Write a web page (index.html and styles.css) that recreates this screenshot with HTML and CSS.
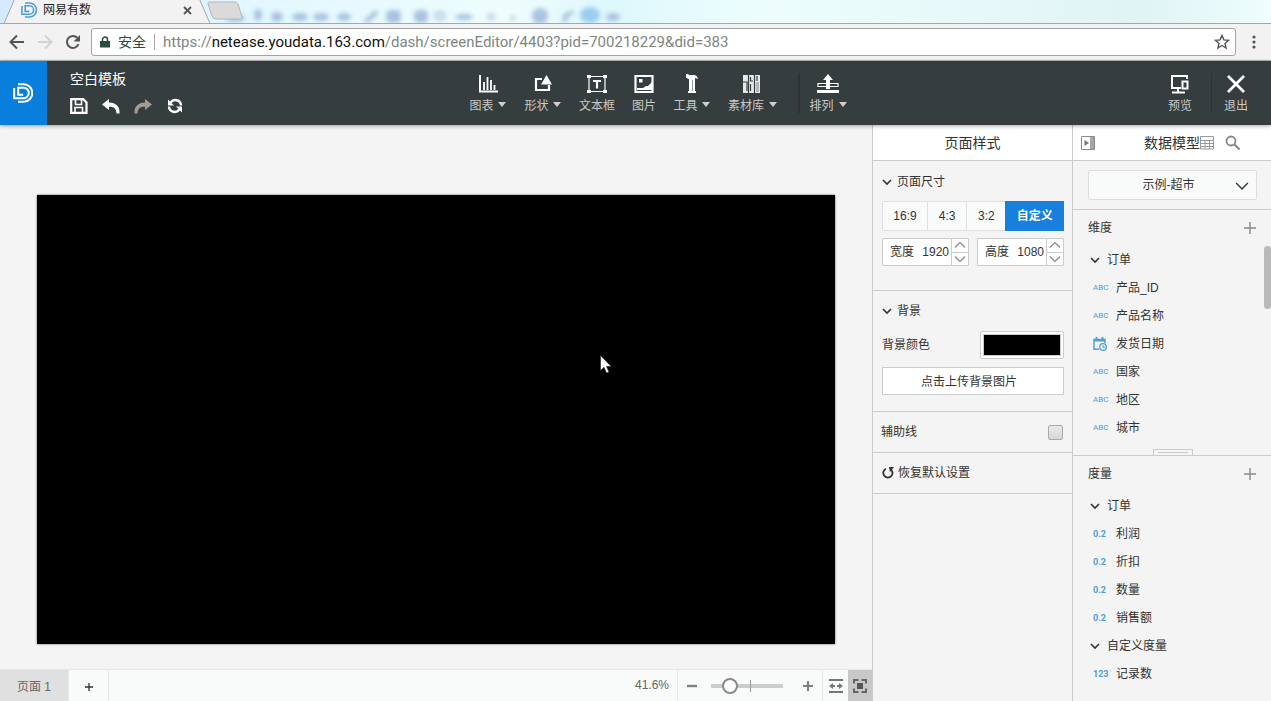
FILE: index.html
```html
<!DOCTYPE html>
<html lang="zh-CN">
<head>
  <meta charset="UTF-8" />
  <meta name="viewport" content="width=device-width, initial-scale=1.0"/>
  <title>网易有数</title>
  <link rel="stylesheet" href="styles.css">
</head>
<body>
  <!-- shared icons -->
  <svg class="defs" aria-hidden="true">
    <symbol id="logo" viewBox="0 0 20 20">
      <path d="M5 1.2h5.5a8.8 8.8 0 0 1 0 17.6H5M1.2 5v10.3h9.3a5.3 5.3 0 0 0 0-10.6H5.2v7h5" fill="none" stroke="currentColor" stroke-width="2"/>
    </symbol>
    <symbol id="chevron" viewBox="0 0 10 10">
      <path d="M1 3l4 4 4-4" fill="none" stroke="currentColor" stroke-width="1.6"/>
    </symbol>
    <symbol id="chevron-thin" viewBox="0 0 12 12">
      <path d="M1 3.500l5 5 5-5" fill="none" stroke="currentColor" stroke-width="1.2"/>
    </symbol>
    <symbol id="plus" viewBox="0 0 12 12">
      <path d="M6 0v12M0 6h12" stroke="currentColor" stroke-width="1.4"/>
    </symbol>
  </svg>

  <!-- Browser window -->
  <div class="tabstrip">
    <svg class="glass" viewBox="0 0 1271 24" preserveAspectRatio="none" aria-hidden="true">
      <g fill="#a9c4df">
        <ellipse cx="235" cy="18" rx="10" ry="4"/><ellipse cx="258" cy="15" rx="4" ry="6"/>
        <ellipse cx="277" cy="17" rx="6" ry="5"/><ellipse cx="300" cy="17" rx="8" ry="4"/>
        <ellipse cx="321" cy="17" rx="8" ry="4"/><ellipse cx="344" cy="17" rx="7" ry="4"/>
        <path d="M363 21l12-11 4 3-11 10z"/><rect x="386" y="10" width="15" height="13" rx="5"/>
        <rect x="414" y="10" width="14" height="13" rx="5"/><ellipse cx="440" cy="16" rx="7" ry="6" opacity=".5"/>
        <ellipse cx="464" cy="17" rx="9" ry="3"/><circle cx="491" cy="17" r="4" opacity=".6"/>
        <circle cx="513" cy="18" r="3" opacity=".6"/><circle cx="540" cy="16" r="8"/>
        <path d="M562 22q0-12 12-11v3q-6 0-7 8z"/><ellipse cx="590" cy="15" rx="10" ry="8" fill="#9bcdf0"/>
        <ellipse cx="613" cy="17" rx="7" ry="4"/>
      </g>
    </svg>
    <svg class="tab-shape" viewBox="0 0 245 24" aria-hidden="true">
      <path d="M0 24v-1h4L15-2h184l11 25v1z" fill="#f2f2f2"/>
      <path d="M0 23.500h4L15-2M199-2l11 25.500h35" fill="none" stroke="#a3a8ab"/>
      <path d="M209 2h26q2 0 3 2l4 13q0 2-2 2h-24q-3 0-4-3l-4-12q0-2 1-2z" fill="#dadada" stroke="#b3b7ba"/>
    </svg>
    <div class="tab">
      <svg class="tab-logo" width="16" height="16"><use href="#logo"/></svg>
      <span>网易有数</span>
      <button class="tab-close" aria-label="关闭标签页"><svg width="9" height="9" viewBox="0 0 9 9"><path d="M1 1l7 7M8 1l-7 7" stroke="#555" stroke-width="1.8"/></svg></button>
    </div>
  </div>
  <div class="browser-bar">
    <button aria-label="后退"><svg width="16" height="16" viewBox="0 0 16 16"><path d="M15 8H2M8 1.500L1.500 8 8 14.500" fill="none" stroke="#555" stroke-width="2"/></svg></button>
    <button aria-label="前进"><svg width="16" height="16" viewBox="0 0 16 16"><path d="M1 8h13M8 1.500L14.500 8 8 14.500" fill="none" stroke="#d3d3d3" stroke-width="2"/></svg></button>
    <button aria-label="刷新"><svg width="16" height="16" viewBox="0 0 16 16"><path d="M13.500 10.200A6 6 0 1 1 12.300 3.800" fill="none" stroke="#555" stroke-width="2"/><path d="M15 1v6.500H8.500z" fill="#555"/></svg></button>
    <div class="address">
      <svg width="10" height="12" viewBox="0 0 10 12"><path d="M0 5h10v6.500H0z" fill="#2b4a42"/><path d="M2.500 5V3.500a2.500 2.500 0 0 1 5 0V5" fill="none" stroke="#2b4a42" stroke-width="1.500"/></svg>
      <span class="secure">安全</span>
      <a class="url" href="#"><span>https://</span><b>netease.youdata.163.com</b><span>/dash/screenEditor/4403?pid=700218229&amp;did=383</span></a>
      <button aria-label="收藏"><svg width="16" height="16" viewBox="0 0 16 16"><path d="M8 1.500l1.900 4.400 4.700.4-3.600 3.100 1.100 4.600L8 11.500 3.900 14 5 9.400 1.400 6.300l4.700-.4z" fill="none" stroke="#555" stroke-width="1.400"/></svg></button>
    </div>
    <button class="menu" aria-label="菜单"><svg width="4" height="14" viewBox="0 0 4 14" fill="#555"><circle cx="2" cy="2" r="1.600"/><circle cx="2" cy="7" r="1.600"/><circle cx="2" cy="12" r="1.600"/></svg></button>
  </div>

  <!-- App header -->
  <header class="app-header">
    <a class="brand" href="#" aria-label="网易有数"><svg width="20" height="20"><use href="#logo"/></svg></a>
    <div class="file">
      <h1>空白模板</h1>
      <div class="file-actions">
        <button aria-label="保存"><svg width="18" height="16" viewBox="0 0 18 16"><path d="M1.200 1.200h12L16.500 4.500v10.300H1.200z" fill="none" stroke="#fff" stroke-width="2.200"/><path d="M5.500 1v5.500h6V1M5 15V9.500h7.500V15" fill="none" stroke="#fff" stroke-width="1.600"/></svg></button>
        <button aria-label="撤销"><svg width="18" height="16" viewBox="0 0 18 16"><path d="M0 6.500L7 1v3.500c7 0 11 4 10.500 11h-3C14.300 10.500 12 8.700 7 8.700V12z" fill="#fff"/></svg></button>
        <button aria-label="重做"><svg width="18" height="16" viewBox="0 0 18 16"><path d="M18 6.500L11 1v3.500C4 4.500 0 8.500.5 15.500h3C3.700 10.500 6 8.700 11 8.700V12z" fill="#a39c94"/></svg></button>
        <button aria-label="刷新数据"><svg width="18" height="16" viewBox="0 0 18 16"><path d="M4.500 5A5.600 5.600 0 0 1 15 7.500M13.500 11A5.600 5.600 0 0 1 3 8.500" fill="none" stroke="#fff" stroke-width="2.400"/><path d="M2 1.500v6h6zM16 14.500v-6h-6z" fill="#fff"/></svg></button>
      </div>
    </div>
    <nav class="tools">
      <button class="drop">
        <svg width="20" height="20" viewBox="0 0 20 20"><path d="M2 1v16.500h18" fill="none" stroke="#fff" stroke-width="2"/><path d="M6 8v8M9.500 3v13M13 6v10M16.500 11v5" stroke="#fff" stroke-width="1.800"/></svg>
        <span>图表</span>
      </button>
      <button class="drop">
        <svg width="20" height="20" viewBox="0 0 20 20"><path d="M9 5H3v11h13v-5" fill="none" stroke="#fff" stroke-width="2.200"/><path d="M13.500 1L19 10.500H8z" fill="#fff"/></svg>
        <span>形状</span>
      </button>
      <button>
        <svg width="22" height="20" viewBox="0 0 22 20"><path d="M3 2.500h16v15H3z" fill="none" stroke="#fff" stroke-width="1.200"/><path d="M1 1h4v3H1zM17 1h4v3h-4zM1 16h4v3H1zM17 16h4v3h-4z" fill="#fff"/><path d="M7 7h8M11 7v7.500" stroke="#fff" stroke-width="2.200"/></svg>
        <span>文本框</span>
      </button>
      <button>
        <svg width="20" height="20" viewBox="0 0 20 20"><path d="M1.500 2h17v16h-17z" fill="none" stroke="#fff" stroke-width="2.200"/><path d="M5 5h3.500v3.500H5zM3 16v-2h6l3-2h2l4-4v8z" fill="#fff"/></svg>
        <span>图片</span>
      </button>
      <button class="drop">
        <svg width="16" height="20" viewBox="0 0 16 20"><path d="M2 0h2l1 1h5q3 0 4 4l-3-1v13h1v2H4v-2h1V5H4L3 4H2z" fill="#fff"/><path d="M8.500 6v11" stroke="#a0a2a3"/></svg>
        <span>工具</span>
      </button>
      <button class="drop">
        <svg width="18" height="20" viewBox="0 0 18 20"><path d="M0 1h17v18H0z" fill="#e8e8e8"/><path d="M5.500 1v18M11.500 1v18" stroke="#363d3f" stroke-width="1.200"/><path d="M0 8h4v9M7.500 3v4h2.500M7.500 10v7M14 2v5" fill="none" stroke="#363d3f" stroke-width="1.200"/><path d="M13 8h3v10h-3z" fill="#b5b7b7"/></svg>
        <span>素材库</span>
      </button>
      <i class="bar"></i>
      <button class="drop">
        <svg width="22" height="20" viewBox="0 0 22 20"><path d="M0 16h22v3H0zM11 0l5 6h-3v9H9V6H6z" fill="#fff"/><path d="M9 9.500H1v3h8M13 9.500h8v3h-8" fill="none" stroke="#fff" stroke-width="1.200"/></svg>
        <span>排列</span>
      </button>
    </nav>
    <div class="actions">
      <button>
        <svg width="20" height="20" viewBox="0 0 20 20"><path d="M17 5V2H2v12h9M8 14v4M2 18.500h13" fill="none" stroke="#fff" stroke-width="2"/><path d="M12.500 7.500h5v7h-5z" fill="none" stroke="#fff" stroke-width="2"/></svg>
        <span>预览</span>
      </button>
      <i class="bar"></i>
      <button>
        <svg width="20" height="20" viewBox="0 0 20 20"><path d="M2 2l16 16M18 2L2 18" stroke="#fff" stroke-width="2.800"/></svg>
        <span>退出</span>
      </button>
    </div>
  </header>

  <main>
    <section class="workspace">
      <div class="stage">
        <div class="screen">
          <svg class="pointer" width="12" height="19" viewBox="0 0 12 19"><path d="M.5.5v15l3.500-3.200 2.500 5.700 2.500-1-2.500-5.500h4.700z" fill="#fff" stroke="#222" stroke-width=".6"/></svg>
        </div>
      </div>
      <div class="statusbar">
        <button class="page-tab">页面 1</button>
        <button class="page-add" aria-label="添加页面"><svg width="8" height="8" viewBox="0 0 8 8"><path d="M4 0v8M0 4h8" stroke="#333" stroke-width="1.300"/></svg></button>
        <output class="percent" for="zoom">41.6%</output>
        <div class="zoom">
          <button aria-label="缩小"><svg width="12" height="12" viewBox="0 0 12 12"><path d="M1 6h10" stroke="#7d8082" stroke-width="2.400"/></svg></button>
          <input type="range" id="zoom" min="0" max="100" value="20" aria-label="缩放比例">
          <button aria-label="放大"><svg width="12" height="12" viewBox="0 0 12 12"><path d="M1 6h10M6 1v10" stroke="#7d8082" stroke-width="2.200"/></svg></button>
        </div>
        <button class="fit" aria-label="适应宽度"><svg width="14" height="14" viewBox="0 0 14 14"><path d="M0 1h14M0 13h14" stroke="#777" stroke-width="1.800"/><path d="M0 7l4-3v2h2v2H4v2zM14 7l-4-3v2H8v2h2v2z" fill="#777"/></svg></button>
        <button class="fit active" aria-label="适应屏幕"><svg width="14" height="14" viewBox="0 0 14 14"><path d="M1 4.500V1h4.500M8.500 1H13v3.500M13 9.500V13H8.500M5.500 13H1V9.500" fill="none" stroke="#666" stroke-width="2"/><rect x="4" y="4" width="6" height="6" fill="#555"/></svg></button>
      </div>
    </section>

    <!-- Page style panel -->
    <aside class="style-panel">
      <h2 class="panel-title">页面样式</h2>
      <section class="size">
        <h3><svg width="10" height="10"><use href="#chevron"/></svg>页面尺寸</h3>
        <div class="ratios">
          <button>16:9</button><button>4:3</button><button>3:2</button><button class="active">自定义</button>
        </div>
        <div class="dims">
          <div class="dim">
            <label for="w">宽度</label><input type="text" id="w" value="1920">
            <div class="spin"><button aria-label="增加宽度"><svg width="12" height="12"><use href="#chevron-thin"/></svg></button><button aria-label="减少宽度"><svg width="12" height="12"><use href="#chevron-thin"/></svg></button></div>
          </div>
          <div class="dim">
            <label for="h">高度</label><input type="text" id="h" value="1080">
            <div class="spin"><button aria-label="增加高度"><svg width="12" height="12"><use href="#chevron-thin"/></svg></button><button aria-label="减少高度"><svg width="12" height="12"><use href="#chevron-thin"/></svg></button></div>
          </div>
        </div>
      </section>
      <section class="background">
        <h3><svg width="10" height="10"><use href="#chevron"/></svg>背景</h3>
        <div class="color-row"><label for="bg">背景颜色</label><input type="color" id="bg" value="#000000"></div>
        <button class="upload">点击上传背景图片</button>
      </section>
      <div class="option"><label for="guides">辅助线</label><input type="checkbox" id="guides"></div>
      <button class="option reset"><svg width="12" height="12" viewBox="0 0 12 12"><path d="M4 1.800A4.600 4.600 0 1 0 8.500 2.200" fill="none" stroke="#333" stroke-width="1.800"/><path d="M7 0h5L8 5z" fill="#333"/></svg>恢复默认设置</button>
    </aside>

    <!-- Data model panel -->
    <aside class="data-panel">
      <div class="panel-title">
        <button aria-label="收起面板"><svg width="14" height="14" viewBox="0 0 14 14"><path d="M.5.5h13v13H.5z" fill="none" stroke="#8a8a8a"/><path d="M3.500 4v6L8 7z" fill="#777"/><path d="M10 1v12M12 1v12" stroke="#888" stroke-width="1.500"/></svg></button>
        <h2>数据模型</h2>
        <button aria-label="查看数据"><svg width="14" height="14" viewBox="0 0 14 14"><path d="M.5.5h13v12.500H.5zM.5 4.500h13M.5 7.500h13M.5 10.500h13M5 4.500V13M9.500 4.500V13" fill="none" stroke="#999"/></svg></button>
        <button class="search" aria-label="搜索"><svg width="16" height="16" viewBox="0 0 16 16"><circle cx="6" cy="6" r="4.500" fill="none" stroke="#888" stroke-width="1.800"/><path d="M9.500 9.500l5 5" stroke="#888" stroke-width="2.200"/></svg></button>
      </div>
      <div class="model">
        <select aria-label="数据模型"><option>示例-超市</option></select>
        <svg width="14" height="14"><use href="#chevron-thin"/></svg>
      </div>
      <section class="fields dimension">
        <header><h3>维度</h3><button aria-label="添加维度"><svg width="12" height="12"><use href="#plus"/></svg></button></header>
        <h4><svg width="10" height="10"><use href="#chevron"/></svg>订单</h4>
        <ul>
          <li><i>ABC</i>产品_ID</li>
          <li><i>ABC</i>产品名称</li>
          <li><svg width="14" height="14" viewBox="0 0 14 14"><path d="M6 12.300H1V2.500h11V6" fill="none" stroke="#4ba0d8" stroke-width="1.500"/><path d="M1 2h11v2.500H1zM2.500 0h2v3h-2zM8.500 0h2v3h-2z" fill="#4ba0d8"/><circle cx="10" cy="10" r="3.300" fill="none" stroke="#4ba0d8" stroke-width="1.300"/><path d="M10 8v2.200h2" fill="none" stroke="#4ba0d8"/></svg>发货日期</li>
          <li><i>ABC</i>国家</li>
          <li><i>ABC</i>地区</li>
          <li><i>ABC</i>城市</li>
        </ul>
        <span class="scroll"></span>
        <span class="handle"></span>
      </section>
      <section class="fields measure">
        <header><h3>度量</h3><button aria-label="添加度量"><svg width="12" height="12"><use href="#plus"/></svg></button></header>
        <h4><svg width="10" height="10"><use href="#chevron"/></svg>订单</h4>
        <ul>
          <li><i>0.2</i>利润</li>
          <li><i>0.2</i>折扣</li>
          <li><i>0.2</i>数量</li>
          <li><i>0.2</i>销售额</li>
        </ul>
        <h4><svg width="10" height="10"><use href="#chevron"/></svg>自定义度量</h4>
        <ul>
          <li><i>123</i>记录数</li>
        </ul>
      </section>
    </aside>
  </main>
</body>
</html>
```
FILE: styles.css
```css
* { box-sizing: border-box; margin: 0; padding: 0; }
body {
  font: 12px/16px "Liberation Sans", "Noto Sans CJK SC", sans-serif;
  color: #333; background: #f4f4f4;
  min-height: 100vh; display: flex; flex-direction: column;
}
button, input, select { font: inherit; color: inherit; border: none; background: none; }
button { cursor: pointer; }
svg { display: block; flex: none; }
h1, h2, h3, h4 { font-size: 12px; font-weight: normal; }
ul { list-style: none; }
i { font-style: normal; }
.defs { position: absolute; width: 0; height: 0; }

/* Browser window */
.tabstrip {
  position: relative; height: 24px; overflow: hidden;
  border-bottom: 1px solid #a3a8ab;
  background: linear-gradient(90deg, #d5eaff, #e2f7ff 20%, #effdfd 40%, #ddf7fc 48%, #eefefe 60%, #e0f3f5 90%, #effefe);
}
.glass { position: absolute; left: 0; top: 0; width: 100%; height: 24px; filter: blur(2px); }
.tab-shape { position: absolute; left: 0; top: 0; width: 245px; height: 24px; }
.tab { position: relative; width: 200px; height: 20px; padding: 0 8px 0 21px; display: flex; align-items: center; gap: 6px; color: #222; }
.tab-logo { color: #4f9fd6; }
.tab-close { margin-left: auto; }
.browser-bar {
  height: 37px; padding: 0 15px 0 9px; display: flex; align-items: center; gap: 12px;
  background: #f2f2f2; border-bottom: 1px solid #b5b5b5;
}
.address {
  flex: 1; height: 28px; margin-left: -2px; padding: 0 5px 0 8px;
  display: flex; align-items: center; gap: 8px;
  background: #fff; border: 1px solid #a5a5a5; border-radius: 3px;
}
.secure { font-size: 14px; color: #2b4a42; padding-right: 8px; border-right: 1px solid #aaa; }
.url { flex: 1; font: 15px/20px Roboto, sans-serif; color: #808683; text-decoration: none; white-space: nowrap; overflow: hidden; }
.url b { font-weight: normal; color: #111; }
.menu { padding-left: 4px; }

/* App header */
.app-header {
  position: relative; height: 64px; display: flex; align-items: stretch;
  background: #363d3f; color: #ddd; box-shadow: 0 1px 4px rgba(0,0,0,0.35);
}
.brand { width: 47px; padding-right: 2px; display: flex; align-items: center; justify-content: center; background: #087fdc; color: #fff; }
.file { padding: 8px 0 0 23px; }
.file h1 { font-size: 14px; line-height: 20px; color: #fff; }
.file-actions { display: flex; gap: 14px; padding-top: 9px; }
.tools { margin: 0 auto; display: flex; gap: 17px; }
.tools button, .actions button { display: flex; flex-direction: column; align-items: center; padding-top: 13px; gap: 4px; color: #c8c9c9; }
.drop span::after {
  content: ""; display: inline-block; margin: 0 0 3px 5px;
  border: 4px solid transparent; border-top: 5px solid #d0d0d0; border-bottom: none;
}
.tools .drop { min-width: 38px; }
.bar { width: 2px; margin: 12px -8px 12px 4px; background: #2d3335; }
.actions { display: flex; gap: 12px; padding: 0 23px 0 36px; }
.actions .bar { margin: 12px 0 12px 7px; width: 1px; }

main { flex: 1; display: flex; }
.workspace { flex: 1; display: flex; flex-direction: column; }
.stage { flex: 1; padding: 70px 37px 25px; }
.screen { position: relative; aspect-ratio: 16 / 9; background: #000; box-shadow: 0 0 2px rgba(0,0,0,0.6); }
.pointer { position: absolute; left: 70.6%; top: 35.600%; }
.statusbar { height: 32px; display: flex; background: #f9fafa; border-top: 1px solid #e6e6e6; color: #666; }
.page-tab { width: 68px; padding-top: 2px; background: #e0e0e0; color: #666; }
.page-add { width: 41px; padding-top: 2px; display: flex; align-items: center; justify-content: center; border: solid #e6e6e6; border-width: 0 1px; }
.percent { margin-left: auto; padding: 7px 8px 0; }
.zoom { width: 146px; display: flex; align-items: center; justify-content: space-between; padding: 0 8px; border: solid #e6e6e6; border-width: 0 1px; }
.zoom input {
  appearance: none; width: 72px; height: 16px; margin-right: 6px;
  background: linear-gradient(#999, #999) 39px 50% / 1px 12px no-repeat, linear-gradient(#ccc, #ccc) 0 50% / 100% 4px no-repeat;
}
.zoom input::-webkit-slider-thumb { appearance: none; width: 16px; height: 16px; border: 2px solid #8a8a8a; border-radius: 50%; background: #fff; }
.fit { width: 25px; display: flex; align-items: center; justify-content: center; }
.fit.active { width: 24px; background: #c8c8c8; }

/* Side panels */
.panel-title {
  height: 36px; font-size: 14px; line-height: 36px; text-align: center;
  background: #fff; border-bottom: 1px solid #ccc;
}
.style-panel { width: 200px; border-left: 1px solid #ccc; }
.style-panel section { padding: 13px 8px 0 9px; border-bottom: 1px solid #ccc; }
.style-panel h2 { font-size: 14px; }
.style-panel h3 { display: flex; align-items: center; gap: 5px; }
.style-panel .size { padding-bottom: 24px; }
.style-panel .background { padding: 12px 8px 16px 9px; }
.ratios { display: flex; height: 30px; margin-top: 11px; border: 1px solid #e0e0e0; border-radius: 2px; background: #f9fbfa; }
.ratios button { flex: 39 0 0; border-right: 1px solid #e0e0e0; }
.ratios button:first-child { flex-grow: 45; }
.ratios .active { flex-grow: 60; margin: -1px; border: none; background: #1880dc; color: #fff; font-weight: bold; }
.dims { display: flex; gap: 8px; margin-top: 7px; }
.dim { flex: 1; height: 28px; display: flex; align-items: center; border: 1px solid #ccc; border-radius: 1px; background: #fff; padding-left: 7px; }
.dim input { flex: 1; width: 20px; text-align: right; padding-right: 2px; }
.spin { width: 17px; height: 26px; display: flex; flex-direction: column; border-left: 1px solid #ccc; color: #888; }
.spin button { flex: 1; display: flex; align-items: center; justify-content: center; }
.spin button:first-child { border-bottom: 1px solid #ccc; }
.spin button:first-child svg { transform: rotate(180deg); }
.color-row { display: flex; align-items: center; justify-content: space-between; margin: 12px 0 8px; }
.color-row input { width: 84px; height: 28px; padding: 2px; border: 1px solid #ccc; border-radius: 2px; background: #fff; }
.color-row input::-webkit-color-swatch-wrapper { padding: 0; }
.color-row input::-webkit-color-swatch { border: 1px solid #ccc; }
.upload { width: 100%; height: 28px; padding: 2px 8px 0 0; border: 1px solid #ccc; background: #fff; }
.option { width: 100%; height: 41px; display: flex; align-items: center; justify-content: space-between; padding: 0 9px 0 8px; border-bottom: 1px solid #ccc; }
.option input { appearance: none; width: 15px; height: 15px; border: 1px solid #aaa; border-radius: 2px; background: linear-gradient(#e8e8e8, #d6d8d8); }
.reset { justify-content: flex-start; gap: 4px; padding-left: 9px; }

.data-panel { width: 199px; border-left: 1px solid #ccc; }
.data-panel .panel-title { display: flex; align-items: center; padding-left: 8px; }
.data-panel h2 { font-size: 14px; margin-left: auto; }
.search { margin: 0 30px 0 11px; }
.model { position: relative; height: 49px; padding: 9px 14px 0 15px; border-bottom: 1px solid #ccc; }
.model select { appearance: none; width: 100%; height: 30px; padding-right: 8px; text-align: center; text-align-last: center; background: #f9fbfa; border: 1px solid #ddd; border-radius: 2px; }
.model svg { position: absolute; right: 22px; top: 18px; pointer-events: none; }
.fields { position: relative; }
.fields header { height: 35px; display: flex; align-items: center; justify-content: space-between; padding: 0 15px; }
.fields header button { color: #888; }
.fields h4 { height: 28px; display: flex; align-items: center; gap: 7px; padding: 2px 0 0 17px; }
.fields li { height: 28px; display: flex; align-items: center; padding: 2px 0 0 20px; }
.fields li svg { margin-right: 9px; }
.fields li i { width: 23px; font: bold 9px/12px Roboto, sans-serif; color: #4ba0d8; }
.dimension { height: 246px; border-bottom: 1px solid #ccc; }
.dimension li i { font-size: 8px; font-weight: normal; }
.scroll { position: absolute; right: 0; top: 36px; width: 7px; height: 63px; border-radius: 4px; background: #b9b9b9; }
.handle { position: absolute; left: 80px; bottom: 0; width: 40px; height: 6px; border: 1px solid #ccc; border-bottom: none; }
.handle::after { content: ""; display: block; height: 1px; margin: 2px 4px; background: #ccc; }
```
